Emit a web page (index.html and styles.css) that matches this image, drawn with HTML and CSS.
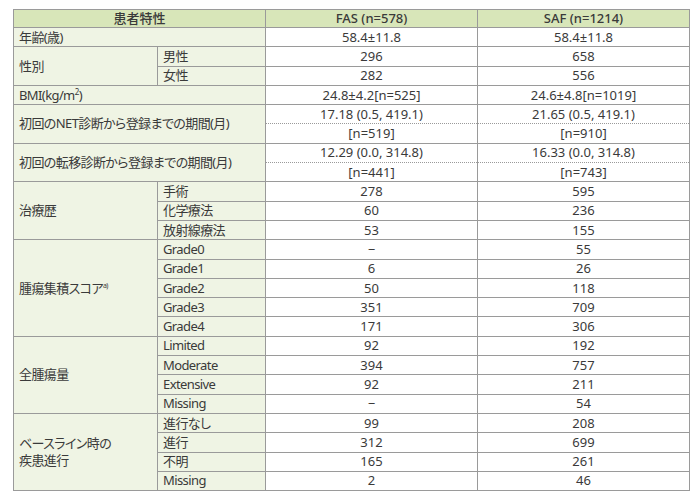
FILE: index.html
```html
<!DOCTYPE html>
<html lang="ja">
<head>
<meta charset="utf-8">
<title>患者特性</title>
<link rel="stylesheet" href="styles.css">
</head>
<body>
<table class="tbl">
  <colgroup>
    <col class="c1"><col class="c2"><col class="c3"><col class="c4">
  </colgroup>
  <thead>
    <tr class="head">
      <th colspan="2">患者特性</th>
      <th>FAS (n=578)</th>
      <th>SAF (n=1214)</th>
    </tr>
  </thead>
  <tbody>
    <tr><td class="lab" colspan="2">年齢(歳)</td><td>58.4±11.8</td><td>58.4±11.8</td></tr>
    <tr><td class="lab" rowspan="2">性別</td><td class="lab">男性</td><td>296</td><td>658</td></tr>
    <tr><td class="lab">女性</td><td>282</td><td>556</td></tr>
    <tr><td class="lab" colspan="2">BMI(kg/m<sup class="sq">2</sup>)</td><td>24.8±4.2[n=525]</td><td>24.6±4.8[n=1019]</td></tr>
    <tr class="top"><td class="lab" colspan="2" rowspan="2">初回のNET診断から登録までの期間(月)</td><td>17.18 (0.5, 419.1)</td><td>21.65 (0.5, 419.1)</td></tr>
    <tr class="bot"><td>[n=519]</td><td>[n=910]</td></tr>
    <tr class="top"><td class="lab" colspan="2" rowspan="2">初回の転移診断から登録までの期間(月)</td><td>12.29 (0.0, 314.8)</td><td>16.33 (0.0, 314.8)</td></tr>
    <tr class="bot"><td>[n=441]</td><td>[n=743]</td></tr>
    <tr><td class="lab" rowspan="3">治療歴</td><td class="lab">手術</td><td>278</td><td>595</td></tr>
    <tr><td class="lab">化学療法</td><td>60</td><td>236</td></tr>
    <tr><td class="lab">放射線療法</td><td>53</td><td>155</td></tr>
    <tr><td class="lab" rowspan="5">腫瘍集積スコア<sup class="note">a)</sup></td><td class="lab">Grade0</td><td>−</td><td>55</td></tr>
    <tr><td class="lab">Grade1</td><td>6</td><td>26</td></tr>
    <tr><td class="lab">Grade2</td><td>50</td><td>118</td></tr>
    <tr><td class="lab">Grade3</td><td>351</td><td>709</td></tr>
    <tr><td class="lab">Grade4</td><td>171</td><td>306</td></tr>
    <tr><td class="lab" rowspan="4">全腫瘍量</td><td class="lab">Limited</td><td>92</td><td>192</td></tr>
    <tr><td class="lab">Moderate</td><td>394</td><td>757</td></tr>
    <tr><td class="lab">Extensive</td><td>92</td><td>211</td></tr>
    <tr><td class="lab">Missing</td><td>−</td><td>54</td></tr>
    <tr><td class="lab" rowspan="4">ベースライン時の<br>疾患進行</td><td class="lab">進行なし</td><td>99</td><td>208</td></tr>
    <tr><td class="lab">進行</td><td>312</td><td>699</td></tr>
    <tr><td class="lab">不明</td><td>165</td><td>261</td></tr>
    <tr><td class="lab">Missing</td><td>2</td><td>46</td></tr>
  </tbody>
</table>
</body>
</html>
```

FILE: styles.css
```css
html, body {
  margin: 0;
  padding: 0;
  background: #ffffff;
}

body {
  padding: 9px 0 0 13px;
  font-family: "Noto Sans", "Noto Sans CJK JP", sans-serif;
  font-feature-settings: "palt";
  color: #3a3a3a;
  font-size: 13px;
}

.tbl {
  border-collapse: collapse;
  table-layout: fixed;
  width: 676px;
}

.c1 { width: 144px; }
.c2 { width: 108px; }
.c3 { width: 212px; }
.c4 { width: 212px; }

.tbl th,
.tbl td {
  border: 1px solid #9a9a9a;
  padding: 0 6px;
  height: 18.3px;
  line-height: 17px;
  white-space: nowrap;
  text-align: center;
  vertical-align: middle;
}

.head th {
  background: #d8e6b9;
  font-weight: 500;
  height: 17px;
}

.tbl td.lab {
  background: #eff4e4;
  text-align: left;
  padding-left: 5px;
  letter-spacing: -0.6px;
}

.tbl tr.top td:not(.lab) {
  border-bottom: 1px dotted #9a9a9a;
}

.tbl tr.bot td {
  border-top: 1px dotted #9a9a9a;
}

.sq {
  font-size: 8px;
  vertical-align: 5px;
  line-height: 0;
}

.note {
  font-size: 7px;
  vertical-align: 5px;
  line-height: 0;
}
```
